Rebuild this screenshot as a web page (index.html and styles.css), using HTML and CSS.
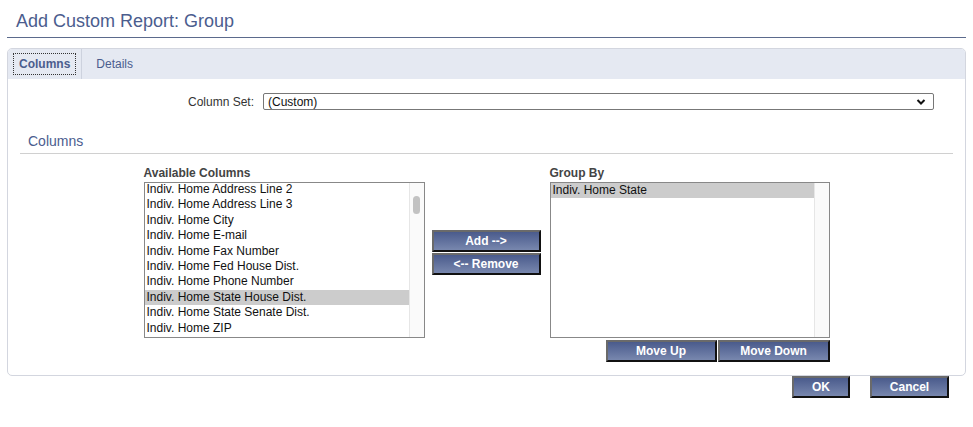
FILE: index.html
```html
<!DOCTYPE html>
<html lang="en">
<head>
  <meta charset="UTF-8" />
  <title>Add Custom Report: Group</title>
  <link rel="stylesheet" href="styles.css">
</head>
<body>

  <h1 class="page-title">Add Custom Report: Group</h1>

  <div class="panel">
    <div class="tabs">
      <div class="tab active"><span>Columns</span></div>
      <div class="tab">Details</div>
    </div>

    <div class="panel-body">
      <div class="form-row">
        <label class="form-label" for="colset">Column Set:</label>
        <div class="select-wrap">
          <select id="colset" class="select">
            <option>(Custom)</option>
          </select>
          <svg class="chevron" width="10" height="8" viewBox="0 0 10 8">
            <path d="M1.5 2 L5 5.5 L8.5 2" fill="none" stroke="#111" stroke-width="2"/>
          </svg>
        </div>
      </div>

      <h2 class="section-title">Columns</h2>

      <div class="picker">
        <div class="list-col">
          <div class="list-label">Available Columns</div>
          <div class="listbox">
            <div class="items scrolled">
              <div class="item">Indiv. Home Address Line 2</div>
              <div class="item">Indiv. Home Address Line 3</div>
              <div class="item">Indiv. Home City</div>
              <div class="item">Indiv. Home E-mail</div>
              <div class="item">Indiv. Home Fax Number</div>
              <div class="item">Indiv. Home Fed House Dist.</div>
              <div class="item">Indiv. Home Phone Number</div>
              <div class="item selected">Indiv. Home State House Dist.</div>
              <div class="item">Indiv. Home State Senate Dist.</div>
              <div class="item">Indiv. Home ZIP</div>
            </div>
            <div class="scrollbar"><div class="thumb"></div></div>
          </div>
        </div>

        <div class="move-col">
          <button class="btn btn-wide">Add --&gt;</button>
          <button class="btn btn-wide">&lt;-- Remove</button>
        </div>

        <div class="list-col right">
          <div class="list-label">Group By</div>
          <div class="listbox">
            <div class="items">
              <div class="item selected">Indiv. Home State</div>
            </div>
            <div class="scrollbar"></div>
          </div>
          <div class="order-btns">
            <button class="btn btn-order">Move Up</button>
            <button class="btn btn-order">Move Down</button>
          </div>
        </div>
      </div>
    </div>
  </div>

  <div class="footer">
    <button class="btn btn-ok">OK</button>
    <button class="btn btn-cancel">Cancel</button>
  </div>

</body>
</html>
```

FILE: styles.css
```css
body {
  margin: 0;
  font-family: "Liberation Sans", Arial, sans-serif;
  font-size: 12px;
  color: #222;
  background: #fff;
}

.page-title {
  margin: 0 7px;
  padding: 10px 0 5px 9px;
  font-size: 18px;
  font-weight: normal;
  line-height: 22px;
  color: #4b5d8e;
  border-bottom: 1px solid #5b6a8c;
}

/* panel with tabs */
.panel {
  margin: 10px 7px 0 7px;
  border: 1px solid #d3d6df;
  border-radius: 5px;
  overflow: hidden;
}

.tabs {
  display: flex;
  height: 30px;
  background: #e5e9f2;
}

.tab {
  display: flex;
  align-items: center;
  padding: 0 14px;
  color: #4b5d8e;
}

.tab.active {
  padding: 0 5px;
  font-weight: bold;
  border-right: 1px solid #cdd2de;
}

.tab.active span {
  border: 1px dotted #333;
  padding: 3px 5px;
}

.panel-body {
  padding: 14px 0 13px 0;
}

.form-row {
  display: flex;
  align-items: center;
  gap: 9px;
}

.form-label {
  width: 246px;
  text-align: right;
  color: #333;
}

.select-wrap {
  position: relative;
  width: 671px;
}

.select {
  appearance: none;
  width: 100%;
  height: 17px;
  margin: 0;
  padding: 0 4px;
  font-family: "Liberation Sans", Arial, sans-serif;
  font-size: 12px;
  color: #111;
  background: #fff;
  border: 1px solid #777;
  border-radius: 2px;
}

.chevron {
  position: absolute;
  right: 8px;
  top: 5px;
}

.section-title {
  margin: 23px 12px 0 12px;
  padding: 0 0 4px 8px;
  font-size: 14px;
  font-weight: normal;
  color: #4b5d8e;
  border-bottom: 1px solid #d0d0d0;
}

/* list picker */
.picker {
  display: flex;
  justify-content: center;
  margin-top: 12px;
}

.list-col {
  display: flex;
  flex-direction: column;
  width: 281px;
}

.list-col.right {
  width: 280px;
}

.list-label {
  font-weight: bold;
  color: #444;
  line-height: 14px;
  margin-bottom: 2px;
}

.listbox {
  display: flex;
  height: 154px;
  border: 1px solid #888;
  overflow: hidden;
}

.items {
  flex: 1;
}

.items.scrolled {
  margin-top: -1px;
}

.item {
  padding-left: 2px;
  line-height: 15.4px;
  font-size: 12px;
  color: #111;
  white-space: nowrap;
}

.item.selected {
  background: #cccccc;
}

.scrollbar {
  width: 14px;
  background: #fafafa;
  border-left: 1px solid #e6e6e6;
  position: relative;
}

.thumb {
  position: absolute;
  left: 3px;
  top: 13px;
  width: 7px;
  height: 18px;
  border-radius: 4px;
  background: #c2c2c2;
}

.move-col {
  display: flex;
  flex-direction: column;
  gap: 1px;
  padding-top: 64px;
  margin: 0 9px 0 7px;
}

.order-btns {
  display: flex;
  justify-content: flex-end;
  gap: 1px;
  margin-top: 2px;
}

/* buttons */
.btn {
  height: 22px;
  padding: 0;
  font-family: "Liberation Sans", Arial, sans-serif;
  font-size: 12px;
  font-weight: bold;
  color: #fff;
  background: linear-gradient(to bottom, #4a5b8c, #7887ae);
  border: 2px solid;
  border-color: #6a6a6a #111 #111 #6a6a6a;
  cursor: pointer;
}

.btn-wide {
  width: 109px;
}

.btn-order {
  width: 111px;
}

.btn-order:last-child {
  width: 112px;
}

.footer {
  display: flex;
  justify-content: flex-end;
  gap: 20px;
  margin: 0 24px 0 0;
}

.btn-ok {
  width: 58px;
}

.btn-cancel {
  width: 79px;
}
```
